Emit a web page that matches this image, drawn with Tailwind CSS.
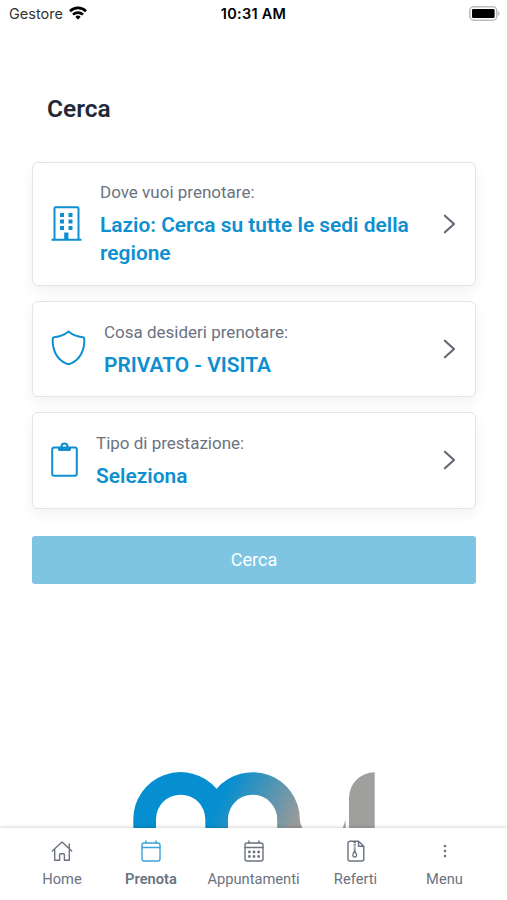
<!DOCTYPE html>
<html lang="it">
<head>
    <meta charset="UTF-8">
    <meta name="viewport" content="width=device-width, initial-scale=1.0">
    <title>Cerca</title>
    <script src="https://cdn.jsdelivr.net/npm/@tailwindcss/browser@4"></script>
</head>
<body class="bg-white font-['Roboto',sans-serif]">
    <div class="flex flex-col w-[507px] h-[900px] overflow-hidden">
        <!-- Status bar -->
        <header class="grid grid-cols-3 items-center h-7 shrink-0 pl-[9px] pr-[7px] font-['Inter',sans-serif] text-black">
            <div class="flex items-center gap-[6px]">
                <span class="text-[14.5px] leading-7 text-[#333]">Gestore</span>
                <svg class="w-[18px] h-[14px] -mt-[2px]" viewBox="0 0 18 14" fill="none" stroke="#000" stroke-width="2.6">
                    <path d="M1 5.2a11.4 11.4 0 0 1 16 0"/>
                    <path d="M4 8.6a7.2 7.2 0 0 1 10 0"/>
                    <path d="M9 13.6 6.3 10.9a3.9 3.9 0 0 1 5.4 0z" fill="#000" stroke="none"/>
                </svg>
            </div>
            <span class="-ml-[2px] text-center text-[14.5px] leading-7 font-semibold tracking-[0.25px]">10:31 AM</span>
            <svg class="w-[31px] h-[15px] -mt-[2px] justify-self-end" viewBox="0 0 31 15">
                <rect x="0.8" y="0.8" width="27" height="13.4" rx="4" fill="#fff" stroke="#bdbdbd" stroke-width="1.6"/>
                <rect x="3" y="3" width="22.6" height="9" rx="1.2" fill="#000"/>
                <path d="M29 5.2c2.2.8 2.2 3.8 0 4.6z" fill="#bdbdbd"/>
            </svg>
        </header>

        <main class="flex flex-col flex-1 min-h-0 overflow-hidden px-8">
            <h1 class="mt-[65px] ml-[15px] text-[24.5px] leading-8 font-semibold text-[#1f2937]">Cerca</h1>

            <div class="flex flex-col gap-[15px] mt-[37px]">
                <div class="flex items-center h-[124px] w-[444px] px-[18px] bg-white border border-[#e3e4e6] rounded-md shadow-[0_5px_14px_rgba(0,0,0,0.06)]">
                    <svg class="w-[31px] h-[35px] -mt-[2px] shrink-0" viewBox="0 0 31 35" fill="none" stroke="#0d8fd0" stroke-width="2">
                        <path d="M3.5 33V2.5a1.3 1.3 0 0 1 1.3-1.3h21.4a1.3 1.3 0 0 1 1.3 1.3V33M0.5 33.7h30"/>
                        <path d="M9 7h4v4H9zM17.5 7h4v4h-4zM9 13.5h4v4H9zM17.5 13.5h4v4h-4zM9 20h4v4H9zM17.5 20h4v4h-4zM13.2 26.5h4.2v7h-4.2z" fill="#0d8fd0" stroke="none"/>
                    </svg>
                    <div class="flex-1 ml-[18px] -mt-px">
                        <p class="text-[17px] leading-6 text-[#6b7280]">Dove vuoi prenotare:</p>
                        <p class="mt-[7px] text-[20.9px] leading-7 font-semibold text-[#0d8fd0]">Lazio: Cerca su tutte le sedi della regione</p>
                    </div>
                    <svg class="w-4 h-5 -mt-px shrink-0" viewBox="0 0 16 20" fill="none" stroke="#66687a" stroke-width="2.2" stroke-linecap="round" stroke-linejoin="round"><path d="M3.9 1.7 13 10 3.9 18.3"/></svg>
                </div>

                <div class="flex items-center h-[96px] w-[444px] px-[18px] bg-white border border-[#e3e4e6] rounded-md shadow-[0_5px_14px_rgba(0,0,0,0.06)]">
                    <svg class="w-[35px] h-[36px] -mt-[2px] shrink-0" viewBox="0 0 35 36" fill="none" stroke="#0d8fd0" stroke-width="2" stroke-linejoin="round">
                        <path d="M17.5 1.5C13.3 5 8.3 6.7 3.2 7.2Q1.7 7.4 1.7 9C1.3 19.5 5.5 29.5 15.5 33.6Q17.5 34.5 19.5 33.6C29.5 29.5 33.7 19.5 33.3 9Q33.3 7.4 31.8 7.2C26.7 6.7 21.7 5 17.5 1.5z"/>
                    </svg>
                    <div class="flex-1 ml-[18px]">
                        <p class="text-[17px] leading-6 text-[#6b7280]">Cosa desideri prenotare:</p>
                        <p class="mt-[7px] text-[20.9px] leading-7 font-semibold text-[#0d8fd0]">PRIVATO - VISITA</p>
                    </div>
                    <svg class="w-4 h-5 -mt-px shrink-0" viewBox="0 0 16 20" fill="none" stroke="#66687a" stroke-width="2.2" stroke-linecap="round" stroke-linejoin="round"><path d="M3.9 1.7 13 10 3.9 18.3"/></svg>
                </div>

                <div class="flex items-center h-[97px] w-[444px] px-[18px] bg-white border border-[#e3e4e6] rounded-md shadow-[0_5px_14px_rgba(0,0,0,0.06)]">
                    <svg class="w-[27px] h-[35px] -mt-[3px] shrink-0" viewBox="0 0 27 35" fill="none" stroke="#0d8fd0" stroke-width="2">
                        <rect x="1.2" y="5.5" width="24.6" height="28.3" rx="2"/>
                        <circle cx="13.5" cy="4.4" r="3"/>
                        <path d="M7 5h4a2.7 2.7 0 0 0 5 0h4v2.600a1.400 1.400 0 0 1-1.400 1.400H8.400A1.400 1.400 0 0 1 7 7.600z" fill="#0d8fd0" stroke="none"/>
                    </svg>
                    <div class="flex-1 ml-[18px] -mt-px">
                        <p class="text-[17px] leading-6 text-[#6b7280]">Tipo di prestazione:</p>
                        <p class="mt-[7px] text-[20.9px] leading-7 font-semibold text-[#0d8fd0]">Seleziona</p>
                    </div>
                    <svg class="w-4 h-5 -mt-px shrink-0" viewBox="0 0 16 20" fill="none" stroke="#66687a" stroke-width="2.2" stroke-linecap="round" stroke-linejoin="round"><path d="M3.9 1.7 13 10 3.9 18.3"/></svg>
                </div>
            </div>

            <button class="w-[444px] h-12 shrink-0 mt-[27px] rounded-[3px] bg-[#7ec4e3] text-lg text-white">Cerca</button>

            <!-- Logo, partly covered by the tab bar -->
            <svg class="w-[243px] h-[80px] shrink-0 mt-[188px] ml-[101px]" viewBox="133 772 243 80">
                <defs>
                    <linearGradient id="brand" gradientUnits="userSpaceOnUse" x1="226" y1="790" x2="296" y2="825">
                        <stop offset="0" stop-color="#058fd0"/>
                        <stop offset="1" stop-color="#9a9a98"/>
                    </linearGradient>
                </defs>
                <path fill="url(#brand)" d="M133.3 852V819.3A47.3 47.3 0 0 1 216.6 788.7A47.3 47.3 0 0 1 299.8 819.3Q300 824 302.5 828V852H277.2V819.3A24.6 24.6 0 0 0 228 819.3V852H205.3V819.3A24.6 24.6 0 0 0 156 819.3V852z"/>
                <path fill="#9fa09d" d="M349 852V798A25.7 25.7 0 0 1 374.7 772.3V852zM345.6 820V828H342.8z"/>
            </svg>
        </main>

        <!-- Tab bar -->
        <nav class="relative flex shrink-0 h-[72px] px-[17px] bg-white text-[14.7px] text-[#6b7280] shadow-[0_-1px_3px_rgba(0,0,0,0.16)]">
            <a class="flex flex-col items-center w-[90px] pt-[12px]">
                <svg class="w-[22px] h-[22px]" viewBox="0 0 22 22" fill="none" stroke="#6b7280" stroke-width="1.4" stroke-linecap="round" stroke-linejoin="round">
                    <path d="M1.3 11 11 2l9.7 9M3.7 9.5V20.2H8.6V14.5a.8.8 0 0 1 .8-.8h3.2a.8.8 0 0 1 .8.8v5.7h4.9V9.5M18.3 8V4"/>
                </svg>
                <span class="mt-[7px] leading-5">Home</span>
            </a>
            <a class="flex flex-col items-center w-[88px] pt-[12px] font-semibold">
                <svg class="w-[22px] h-[22px]" viewBox="0 0 22 22" fill="none" stroke="#38a3da" stroke-width="1.4" stroke-linecap="round">
                    <rect x="2" y="3" width="18" height="18" rx="2"/>
                    <path d="M2 7.5h18M6 1v2M16 1v2"/>
                </svg>
                <span class="mt-[7px] leading-5">Prenota</span>
            </a>
            <a class="flex flex-col items-center w-[117px] pt-[12px]">
                <svg class="w-[22px] h-[22px]" viewBox="0 0 22 22" fill="none" stroke="#6b7280" stroke-width="1.4" stroke-linecap="round">
                    <rect x="2" y="3" width="18" height="18" rx="2"/>
                    <path d="M2 7.5h18M6 1v2M16 1v2"/>
                    <path d="M6.4 12h.01M11 12h.01M15.6 12h.01M6.4 16.5h.01M11 16.5h.01M15.6 16.5h.01" stroke-width="2.8"/>
                </svg>
                <span class="mt-[7px] leading-5">Appuntamenti</span>
            </a>
            <a class="flex flex-col items-center w-[87px] pt-[12px]">
                <svg class="w-[22px] h-[22px]" viewBox="0 0 22 22" fill="none" stroke="#6b7280" stroke-width="1.4" stroke-linejoin="round">
                    <path d="M5 1.2h8.500l5.300 5V19a2 2 0 0 1-2 2H5a2 2 0 0 1-2-2V3.200a2 2 0 0 1 2-2zM13.500 1.200v5h5.300"/>
                    <path d="M9.700 2V10.500" stroke-width="2.400" stroke-dasharray="1.200 1"/>
                    <path d="M9.700 10.500 8 14.200a1.900 1.900 0 1 0 3.400 0z" fill="#fff"/>
                </svg>
                <span class="mt-[7px] leading-5">Referti</span>
            </a>
            <a class="flex flex-col items-center flex-1 pt-[12px]">
                <svg class="w-[22px] h-[22px]" viewBox="0 0 22 22" fill="#6b7280">
                    <circle cx="11" cy="6" r="1.3"/><circle cx="11" cy="11" r="1.3"/><circle cx="11" cy="16" r="1.3"/>
                </svg>
                <span class="mt-[7px] leading-5">Menu</span>
            </a>
        </nav>
    </div>
</body>
</html>
